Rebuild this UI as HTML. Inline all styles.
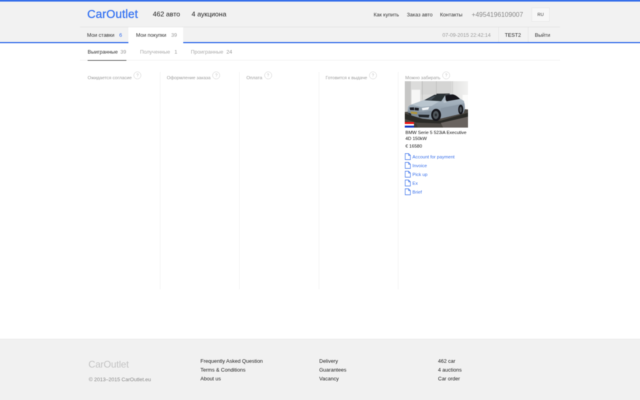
<!DOCTYPE html>
<html lang="ru">
<head>
<meta charset="utf-8">
<title>CarOutlet</title>
<style>
html,body{margin:0;padding:0;background:#fff;overflow:hidden;}
body{width:640px;height:400px;position:relative;font-family:"Liberation Sans",sans-serif;}
#s{position:absolute;left:0;top:0;width:1600px;height:1000px;overflow:hidden;transform:scale(0.4);will-change:transform;transform-origin:0 0;background:#fff;color:#333;font-size:13px;}
#s *{box-sizing:border-box;}
#w{position:absolute;left:-50px;top:-50px;width:1700px;height:1100px;background:#fff;filter:blur(1px);}
#c{position:absolute;left:50px;top:50px;width:1600px;height:1000px;}
.abs{position:absolute;white-space:nowrap;}
#topbar{left:-50px;top:-50px;width:1700px;height:53.5px;background:#376fea;}
#head{left:-50px;top:0;width:1700px;height:106px;background:#f2f2f2;}
#headline{left:200px;top:67px;width:1200px;height:1px;background:#dcdcdc;}
#blueline{left:-50px;top:105px;width:1700px;height:3px;background:#376fea;}
#logo{left:218px;top:15px;font-size:29px;color:#3a76f2;letter-spacing:0.35px;line-height:40px;-webkit-text-stroke:0.6px #3a76f2;}
.stat{top:25px;font-size:17px;color:#222;line-height:22px;}
.nav{top:29px;font-size:13px;color:#333;line-height:16px;}
#phone{left:1179px;top:25px;font-size:16.5px;color:#888;line-height:22px;}
#ru{left:1329px;top:19px;width:45px;height:35px;border:1px solid #e4e4e4;background:#f7f7f7;font-size:11px;color:#444;text-align:center;line-height:33px;}
.tab{top:68px;height:42px;font-size:13px;color:#333;line-height:40px;}
.tab b{font-weight:normal;color:#376fea;}
#tab2{left:321px;width:137px;background:#fff;}
#tab2 b{color:#999;}
.r2{top:80px;font-size:13px;line-height:16px;color:#999;}
.vsep{top:68px;width:1px;height:37px;background:#dddddd;}
.sub{top:122px;font-size:13px;line-height:16px;color:#aaa;}
.sub b{font-weight:normal;color:#999;position:absolute;top:0;}
#subline{left:200px;top:150px;width:1200px;height:1px;background:#e6e6e6;}
#subact{left:219px;top:150px;width:97px;height:2px;background:#666;}
.col{top:186px;font-size:11.5px;line-height:16px;color:#9c9c9c;}
.q{display:inline-block;width:19px;height:19px;border:1px solid #ccc;border-radius:50%;font-size:10px;line-height:17px;text-align:center;color:#bbb;vertical-align:top;margin:-7px 0 0 5px;}
.cs{top:180px;width:1px;height:543px;background:#ececec;}
#car{left:1012px;top:203px;width:158px;height:116px;overflow:hidden;}
.ct{left:1013.5px;font-size:11.5px;line-height:15px;color:#111;}
.lk{left:1031px;font-size:11.5px;line-height:14px;color:#376fea;}
.ic{left:1012px;width:15px;height:17px;}
#foot{left:-50px;top:847px;width:1700px;height:203px;background:#f1f1f1;border-top:2px solid #ebebeb;}
#flogo{left:221px;top:896px;font-size:24px;line-height:30px;color:#c4c4c4;letter-spacing:-0.2px;}
#copy{left:222px;top:940.5px;font-size:13px;line-height:16px;color:#888;}
.fl{font-size:13px;line-height:22px;color:#222;top:892px;}
</style>
</head>
<body>
<div id="s"><div id="w"><div id="c">
<div class="abs" id="head"></div>
<div class="abs" id="topbar"></div>
<div class="abs" id="headline"></div>
<div class="abs" id="logo">CarOutlet</div>
<div class="abs stat" style="left:382px">462 авто</div>
<div class="abs stat" style="left:479px">4 аукциона</div>
<div class="abs nav" style="left:934px">Как купить</div>
<div class="abs nav" style="left:1017px">Заказ авто</div>
<div class="abs nav" style="left:1100px">Контакты</div>
<div class="abs" id="phone">+4954196109007</div>
<div class="abs" id="ru">RU</div>

<div class="abs" id="blueline"></div>
<div class="abs tab" style="left:217.5px">Мои ставки <b style="position:absolute;left:80.5px">6</b></div>
<div class="abs tab" id="tab2"><span style="position:absolute;left:19px">Мои покупки</span> <b style="position:absolute;left:107px">39</b></div>
<div class="abs r2" style="left:1106px">07-09-2015 22:42:14</div>
<div class="abs vsep" style="left:1246px"></div>
<div class="abs r2" style="left:1262px;color:#222">TEST2</div>
<div class="abs vsep" style="left:1320px"></div>
<div class="abs r2" style="left:1337px;color:#333">Выйти</div>

<div class="abs sub" style="left:219px;color:#333">Выигранные <b style="left:82px">39</b></div>
<div class="abs sub" style="left:350px">Полученные <b style="left:86px">1</b></div>
<div class="abs sub" style="left:477px">Проигранные <b style="left:89px">24</b></div>
<div class="abs" id="subline"></div>
<div class="abs" id="subact"></div>

<div class="abs col" style="left:219px">Ожидается согласие<span class="q">?</span></div>
<div class="abs col" style="left:417px">Оформление заказа<span class="q">?</span></div>
<div class="abs col" style="left:616px">Оплата<span class="q">?</span></div>
<div class="abs col" style="left:814px">Готовится к выдаче<span class="q">?</span></div>
<div class="abs col" style="left:1013px">Можно забирать<span class="q">?</span></div>
<div class="abs cs" style="left:400px"></div>
<div class="abs cs" style="left:598px"></div>
<div class="abs cs" style="left:797px"></div>
<div class="abs cs" style="left:995px"></div>

<div class="abs" id="car">
<svg width="158" height="116" viewBox="0 0 158 116">
<defs>
<linearGradient id="bg" x1="0" y1="0" x2="1" y2="0"><stop offset="0" stop-color="#c9c9c8"/><stop offset="0.12" stop-color="#dcdcdb"/><stop offset="0.5" stop-color="#dededd"/><stop offset="0.8" stop-color="#e6e6e5"/><stop offset="1" stop-color="#f2f2f1"/></linearGradient>
<linearGradient id="fl" x1="0" y1="0" x2="0" y2="1"><stop offset="0" stop-color="#3c3b3a"/><stop offset="0.45" stop-color="#5b5a58"/><stop offset="1" stop-color="#6e6d6b"/></linearGradient>
<linearGradient id="body" x1="0" y1="0" x2="0" y2="1"><stop offset="0" stop-color="#b4c0ca"/><stop offset="0.45" stop-color="#9dabb7"/><stop offset="1" stop-color="#7b8995"/></linearGradient>
<filter id="sf" x="-10%" y="-10%" width="120%" height="120%"><feGaussianBlur stdDeviation="2.2"/></filter>
</defs>
<g transform="scale(0.3068 0.3045) translate(-7 -8)">
<rect x="0" y="0" width="530" height="400" fill="url(#bg)"/>
<g filter="url(#sf)">
<rect x="62" y="78" width="70" height="125" fill="#f7f7f6"/>
<rect x="0" y="0" width="56" height="260" fill="#c6c6c5"/>
<rect x="140" y="0" width="250" height="118" fill="#d5d5d4"/>
<rect x="148" y="0" width="4" height="160" fill="#b4b4b3"/>
<rect x="262" y="0" width="4" height="112" fill="#b9b9b8"/>
<rect x="395" y="0" width="4" height="125" fill="#c2c2c1"/>
<rect x="478" y="120" width="60" height="118" fill="#fcfcfb"/>
<path d="M-10 262 L60 256 L480 236 L540 242 L540 410 L-10 410 Z" fill="#4b4642"/>
<path d="M-10 268 L150 318 L300 332 L500 274 L540 262 L540 292 L330 356 L100 348 L-10 312 Z" fill="#2c2926"/>
<path d="M300 350 L520 300 L540 310 L540 410 L330 410 Z" fill="#69635e"/>
<path d="M-10 335 L100 355 L120 410 L-10 410 Z" fill="#3d3935"/>
</g>
<g filter="url(#sf)">
<path d="M30 262 L33 222 Q38 208 60 200 L170 160 L250 119 Q300 110 385 113 Q420 120 452 148 L488 170 Q499 200 497 238 L484 270 L300 314 L232 324 L150 314 L62 289 Z" fill="url(#body)"/>
<path d="M60 200 L170 162 L300 166 L225 212 L140 220 Z" fill="#b9c5ce"/>
<path d="M34 250 L150 262 L225 250 L232 322 L150 314 L62 289 L32 264 Z" fill="#7f8d9a"/>
<path d="M300 230 L490 190 L496 238 L484 270 L300 314 Z" fill="#8c99a6"/>
<path d="M166 164 L248 120 L340 117 L304 172 Z" fill="#2b3036"/>
<path d="M186 160 L240 132 L258 131 L222 163 Z" fill="#4a535b"/>
<path d="M336 121 L400 116 Q434 126 456 154 L342 174 Z" fill="#17191c"/>
<path d="M266 111 L372 109 L374 118 L264 120 Z" fill="#2a2e33"/>
<path d="M46 224 L82 222 L84 246 L50 245 Z" fill="#1b1e22"/>
<path d="M88 224 L122 228 L120 249 L88 247 Z" fill="#1b1e22"/>
<path d="M146 228 L206 220 L198 241 L150 247 Z" fill="#f2f5f8"/>
<path d="M56 257 L108 262 L107 280 L56 273 Z" fill="#b0953a"/>
<path d="M116 282 L208 284 L202 307 L123 303 Z" fill="#23262a"/>
<path d="M36 266 L58 274 L60 290 L40 280 Z" fill="#23262a"/>
<ellipse cx="262" cy="285" rx="40" ry="50" fill="#17181a"/>
<ellipse cx="260" cy="285" rx="24" ry="33" fill="#50565b"/>
<ellipse cx="260" cy="285" rx="9" ry="12" fill="#2a2d31"/>
<ellipse cx="463" cy="241" rx="21" ry="40" fill="#17181a"/>
<ellipse cx="462" cy="241" rx="10" ry="24" fill="#4d5358"/>
<path d="M320 170 L345 166 L348 183 L324 185 Z" fill="#b9c4cc"/>
</g>
</g>
</svg>
</div>
<div class="abs" style="left:1012px;top:305px;width:23px;height:14px;">
<svg width="23" height="14" viewBox="0 0 23 14"><rect width="23" height="5" fill="#f01515"/><rect y="5" width="23" height="4" fill="#fff"/><rect y="9" width="23" height="5" fill="#1238c4"/></svg>
</div>
<div class="abs ct" style="top:324px">BMW Serie 5 523iA Executive<br>4D 150kW</div>
<div class="abs ct" style="top:358px">€ 16580</div>

<svg class="abs ic" style="top:383px" viewBox="0 0 15 17"><path d="M1 1h8.5l4.5 4.5v10.5H1z M9.5 1v4.5h4.5" fill="#fff" stroke="#376fea" stroke-width="1.3"/></svg>
<div class="abs lk" style="top:384.5px">Account for payment</div>
<svg class="abs ic" style="top:405px" viewBox="0 0 15 17"><path d="M1 1h8.5l4.5 4.5v10.5H1z M9.5 1v4.5h4.5" fill="#fff" stroke="#376fea" stroke-width="1.3"/></svg>
<div class="abs lk" style="top:406.5px">Invoice</div>
<svg class="abs ic" style="top:427px" viewBox="0 0 15 17"><path d="M1 1h8.5l4.5 4.5v10.5H1z M9.5 1v4.5h4.5" fill="#fff" stroke="#376fea" stroke-width="1.3"/></svg>
<div class="abs lk" style="top:428.5px">Pick up</div>
<svg class="abs ic" style="top:449px" viewBox="0 0 15 17"><path d="M1 1h8.5l4.5 4.5v10.5H1z M9.5 1v4.5h4.5" fill="#fff" stroke="#376fea" stroke-width="1.3"/></svg>
<div class="abs lk" style="top:450.5px">Ex</div>
<svg class="abs ic" style="top:471px" viewBox="0 0 15 17"><path d="M1 1h8.5l4.5 4.5v10.5H1z M9.5 1v4.5h4.5" fill="#fff" stroke="#376fea" stroke-width="1.3"/></svg>
<div class="abs lk" style="top:472.5px">Brief</div>

<div class="abs" id="foot"></div>
<div class="abs" id="flogo">CarOutlet</div>
<div class="abs" id="copy">© 2013–2015 CarOutlet.eu</div>
<div class="abs fl" style="left:501px">Frequently Asked Question<br>Terms &amp; Conditions<br>About us</div>
<div class="abs fl" style="left:798px">Delivery<br>Guarantees<br>Vacancy</div>
<div class="abs fl" style="left:1095px">462 car<br>4 auctions<br>Car order</div>
</div></div></div>
</body>
</html>
